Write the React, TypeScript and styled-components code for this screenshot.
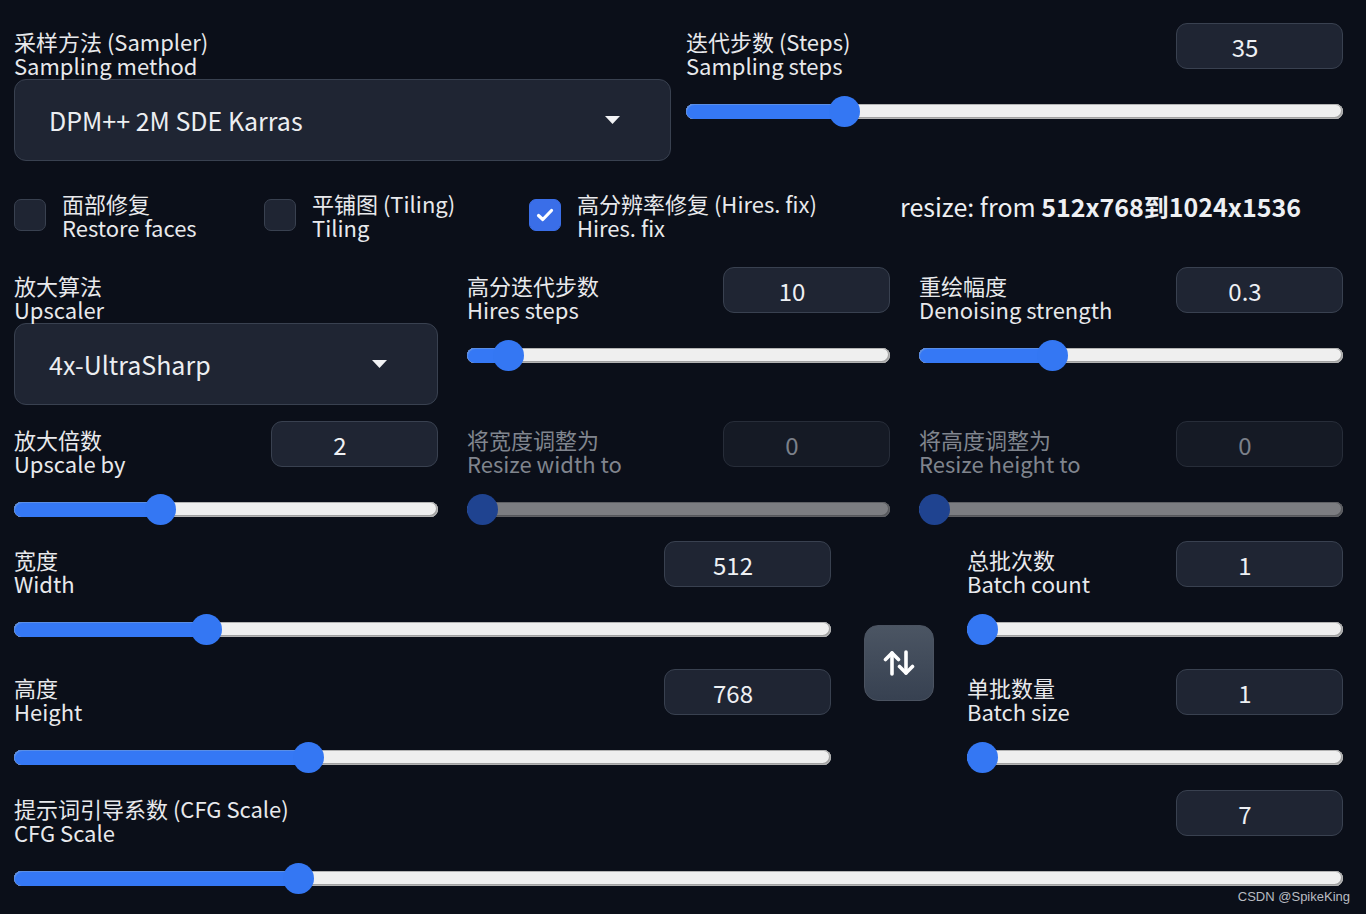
import React from "react";
import styled, { createGlobalStyle } from "styled-components";

const GlobalStyle = createGlobalStyle`
  html, body {
    margin: 0;
    padding: 0;
    background: #0b0f19;
  }
  body {
    font-family: "Noto Sans CJK SC", "Noto Sans", sans-serif;
    color: #e5e7eb;
  }
  * {
    box-sizing: border-box;
  }
`;

const Page = styled.div`
  position: relative;
  width: 1366px;
  height: 914px;
  padding: 23px 23px 0 14px;
  overflow: hidden;
`;

const Row = styled.div<{ $top?: number }>`
  margin-top: ${(p) => p.$top ?? 0}px;
`;

const TwoCols = styled(Row)`
  display: grid;
  grid-template-columns: 657px 657px;
  column-gap: 15px;
`;

const ThreeCols = styled(Row)`
  display: grid;
  grid-template-columns: 424px 423px 424px;
  column-gap: 29px;
`;

const SizeRow = styled(Row)`
  display: grid;
  grid-template-columns: 817px 70px 376px;
  column-gap: 33px;
`;

const Stack = styled.div`
  display: flex;
  flex-direction: column;
  gap: 25px;
`;

const Label = styled.div<{ $disabled?: boolean }>`
  padding-top: 6px;
  font-size: 22px;
  line-height: 24px;
  color: ${(p) => (p.$disabled ? "#80858e" : "#e8e9ec")};
  white-space: nowrap;
`;

const Line = styled.div``;

const Dropdown = styled.div`
  margin-top: 2px;
  height: 82px;
  display: flex;
  align-items: center;
  justify-content: space-between;
  padding: 0 50px 0 34px;
  background: #1f2533;
  border: 1px solid #394150;
  border-radius: 12px;
  font-size: 25px;
  color: #eceef1;
`;

const Block = styled.div``;

const Header = styled.div`
  display: flex;
  justify-content: space-between;
  align-items: flex-start;
  height: 56px;
`;

const NumberBox = styled.input<{ $disabled?: boolean }>`
  width: 167px;
  height: 46px;
  border-radius: 11px;
  border: 1px solid ${(p) => (p.$disabled ? "#272d39" : "#394150")};
  background: ${(p) => (p.$disabled ? "#151a25" : "#1f2533")};
  color: ${(p) => (p.$disabled ? "#7b808a" : "#eef0f3")};
  font-family: "Noto Sans CJK SC", "Noto Sans", sans-serif;
  font-size: 24px;
  text-align: center;
  outline: none;
  padding: 0 29px 0 0;
`;

const SliderWrap = styled.div`
  margin-top: 17px;
  height: 30px;
  display: flex;
  align-items: center;
`;

const Track = styled.div<{ $disabled?: boolean }>`
  position: relative;
  flex: 1;
  height: 15px;
  border-radius: 8px;
  background: ${(p) => (p.$disabled ? "#7c7d81" : "#efefef")};
  box-shadow: inset 0 0 0 1px ${(p) => (p.$disabled ? "#5f6064" : "#b3b3b3")},
    inset -1px -1px 0 1px ${(p) => (p.$disabled ? "#56575b" : "#a0a0a0")};
`;

const Fill = styled.div<{ $disabled?: boolean }>`
  position: absolute;
  left: 0;
  top: 0;
  bottom: 0;
  border-radius: 8px 0 0 8px;
  background: ${(p) => (p.$disabled ? "#1e4391" : "#3578f5")};
  box-shadow: inset 1px 1px 0 #5a8ee6;
`;

const Thumb = styled.div<{ $disabled?: boolean }>`
  position: absolute;
  top: 50%;
  width: 31px;
  height: 31px;
  margin-left: -15.5px;
  margin-top: -15.5px;
  border-radius: 50%;
  background: ${(p) => (p.$disabled ? "#1f4390" : "#3477f3")};
`;

const CheckRow = styled(Row)`
  display: grid;
  grid-template-columns: 250px 265px 371px auto;
  align-items: center;
`;

const CheckItem = styled.div`
  display: flex;
  align-items: center;
  gap: 16px;
`;

const Box = styled.div<{ $checked?: boolean }>`
  width: 32px;
  height: 32px;
  border-radius: 7px;
  flex-shrink: 0;
  display: flex;
  align-items: center;
  justify-content: center;
  background: ${(p) => (p.$checked ? "#3a6ee8" : "#1f2533")};
  border: 1px solid ${(p) => (p.$checked ? "#3a6ee8" : "#394150")};
`;

const CheckText = styled.div`
  font-size: 22px;
  line-height: 24px;
  color: #e8e9ec;
  white-space: nowrap;
`;

const ResizeNote = styled.div`
  align-self: flex-start;
  font-size: 25px;
  line-height: 30px;
  color: #eef0f3;
  white-space: nowrap;
  b {
    font-weight: 700;
  }
`;

const SwapButton = styled.div`
  align-self: flex-start;
  margin-top: 84px;
  width: 70px;
  height: 76px;
  border-radius: 14px;
  border: 1px solid #4b5361;
  background: linear-gradient(180deg, #4b5563 0%, #374151 100%);
  display: flex;
  align-items: center;
  justify-content: center;
`;

const Watermark = styled.div`
  position: absolute;
  right: 16px;
  bottom: 10px;
  font-family: "Liberation Sans", Arial, sans-serif;
  font-size: 13px;
  color: #b9bcc2;
`;

const Caret = () => (
  <svg width="15" height="8" viewBox="0 0 15 8">
    <path d="M0 0 L15 0 L7.5 8 Z" fill="#f2f3f5" />
  </svg>
);

const SwapIcon = () => (
  <svg width="32" height="26" viewBox="0 0 32 26" fill="none" stroke="#ffffff" strokeWidth="3.6" strokeLinecap="round" strokeLinejoin="round">
    <path d="M9 3 V24" />
    <path d="M2.5 9.5 L9 3 L15.5 9.5" />
    <path d="M23 2 V23" />
    <path d="M16.5 16.5 L23 23 L29.5 16.5" />
  </svg>
);

const CheckMark = () => (
  <svg width="18" height="14" viewBox="0 0 18 14" fill="none" stroke="#ffffff" strokeWidth="3.2" strokeLinecap="round" strokeLinejoin="round">
    <path d="M2.5 7.5 L6.8 11.5 L15.5 2.5" />
  </svg>
);

interface SliderProps {
  value: number;
  min: number;
  max: number;
  disabled?: boolean;
}

const Slider = ({ value, min, max, disabled }: SliderProps) => {
  const frac = (value - min) / (max - min);
  const pos = `calc(15.5px + ${frac} * (100% - 31px))`;
  return (
    <SliderWrap>
      <Track $disabled={disabled}>
        <Fill $disabled={disabled} style={{ width: pos }} />
        <Thumb $disabled={disabled} style={{ left: pos }} />
      </Track>
    </SliderWrap>
  );
};

interface FieldProps {
  zh: string;
  en: string;
  value: number;
  min: number;
  max: number;
  disabled?: boolean;
}

const SliderField = ({ zh, en, value, min, max, disabled }: FieldProps) => (
  <Block>
    <Header>
      <Label $disabled={disabled}>
        <Line>{zh}</Line>
        <Line>{en}</Line>
      </Label>
      <NumberBox $disabled={disabled} readOnly disabled={disabled} value={String(value)} />
    </Header>
    <Slider value={value} min={min} max={max} disabled={disabled} />
  </Block>
);

const DropdownField = ({ zh, en, value }: { zh: string; en: string; value: string }) => (
  <Block>
    <Label>
      <Line>{zh}</Line>
      <Line>{en}</Line>
    </Label>
    <Dropdown>
      <span>{value}</span>
      <Caret />
    </Dropdown>
  </Block>
);

const Check = ({ zh, en, checked }: { zh: string; en: string; checked?: boolean }) => (
  <CheckItem>
    <Box $checked={checked}>{checked && <CheckMark />}</Box>
    <CheckText>
      <Line>{zh}</Line>
      <Line>{en}</Line>
    </CheckText>
  </CheckItem>
);

const App = () => {
  return (
    <>
      <GlobalStyle />
      <Page>
        <TwoCols>
          <DropdownField zh="采样方法 (Sampler)" en="Sampling method" value="DPM++ 2M SDE Karras" />
          <SliderField zh="迭代步数 (Steps)" en="Sampling steps" value={35} min={1} max={150} />
        </TwoCols>

        <CheckRow $top={30}>
          <Check zh="面部修复" en="Restore faces" />
          <Check zh="平铺图 (Tiling)" en="Tiling" />
          <Check zh="高分辨率修复 (Hires. fix)" en="Hires. fix" checked />
          <ResizeNote>
            resize: from <b>512x768到1024x1536</b>
          </ResizeNote>
        </CheckRow>

        <ThreeCols $top={28}>
          <DropdownField zh="放大算法" en="Upscaler" value="4x-UltraSharp" />
          <SliderField zh="高分迭代步数" en="Hires steps" value={10} min={0} max={150} />
          <SliderField zh="重绘幅度" en="Denoising strength" value={0.3} min={0} max={1} />
        </ThreeCols>

        <ThreeCols $top={16}>
          <SliderField zh="放大倍数" en="Upscale by" value={2} min={1} max={4} />
          <SliderField zh="将宽度调整为" en="Resize width to" value={0} min={0} max={2048} disabled />
          <SliderField zh="将高度调整为" en="Resize height to" value={0} min={0} max={2048} disabled />
        </ThreeCols>

        <SizeRow $top={17}>
          <Stack>
            <SliderField zh="宽度" en="Width" value={512} min={64} max={2048} />
            <SliderField zh="高度" en="Height" value={768} min={64} max={2048} />
          </Stack>
          <SwapButton>
            <SwapIcon />
          </SwapButton>
          <Stack>
            <SliderField zh="总批次数" en="Batch count" value={1} min={1} max={100} />
            <SliderField zh="单批数量" en="Batch size" value={1} min={1} max={8} />
          </Stack>
        </SizeRow>

        <Row $top={18}>
          <SliderField zh="提示词引导系数 (CFG Scale)" en="CFG Scale" value={7} min={1} max={30} />
        </Row>

        <Watermark>CSDN @SpikeKing</Watermark>
      </Page>
    </>
  );
};

export default App;
